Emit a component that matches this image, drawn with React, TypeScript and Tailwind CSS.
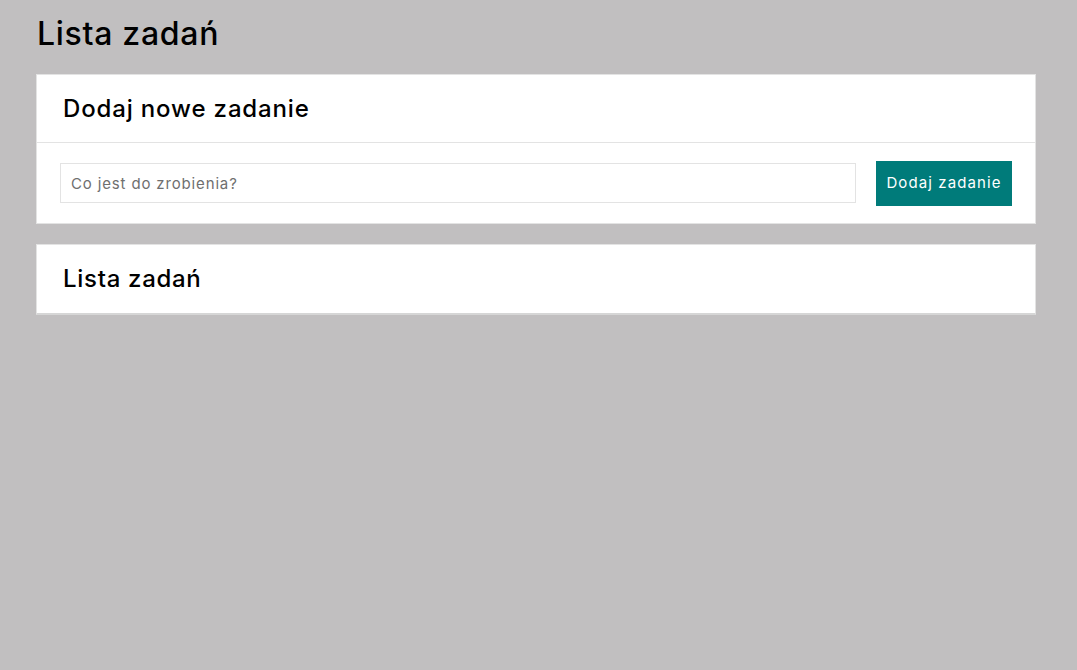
export default function App() {
  return (
    <div className="min-h-screen bg-[#c1bfc0] font-['Inter',sans-serif] text-black">
      <div className="ml-[36px] w-[1000px] pt-[14px]">
        <h1 className="text-[32px] font-medium leading-[40px] pl-[1px] tracking-[0.7px]">Lista zadań</h1>

        <div className="mt-[20px] bg-white border border-[#e3e3e3]">
          <div className="h-[68px] flex items-center px-[26px] border-b border-[#e3e3e3]">
            <h2 className="text-[24px] font-medium tracking-[0.85px]">Dodaj nowe zadanie</h2>
          </div>
          <div className="flex items-start gap-[20px] px-[23px] pt-[18px] pb-[17px]">
            <input
              type="text"
              placeholder="Co jest do zrobienia?"
              className="flex-1 mt-[2px] h-[40px] border border-[#e3e3e3] px-[10px] text-[15px] tracking-[0.85px] placeholder:text-[#6f6f6f] outline-none"
            />
            <button className="h-[45px] w-[136px] bg-[#007b7a] text-white text-[15px] tracking-[1.1px]">Dodaj zadanie</button>
          </div>
        </div>

        <div className="mt-[20px] bg-white border border-[#e3e3e3] border-b-[#d6d6d6] border-b-2">
          <div className="h-[68px] flex items-center px-[26px]">
            <h2 className="text-[24px] font-medium tracking-[0.7px]">Lista zadań</h2>
          </div>
        </div>
      </div>
    </div>
  );
}
